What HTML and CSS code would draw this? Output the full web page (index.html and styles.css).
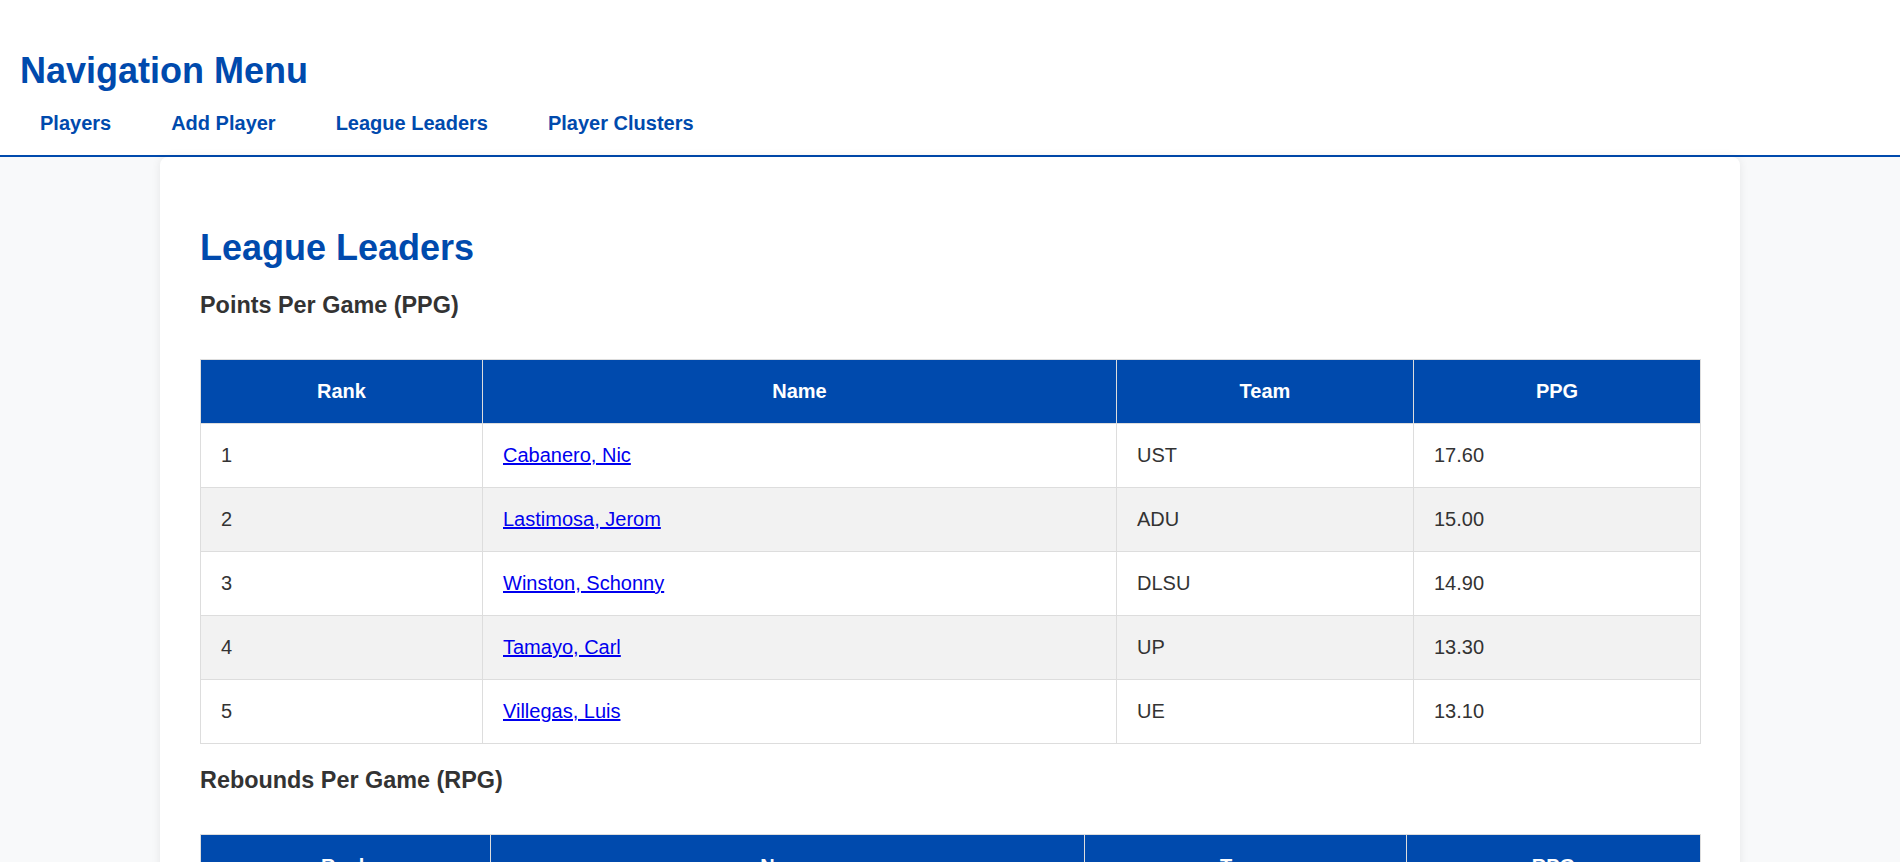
FILE: index.html
```html
<!DOCTYPE html>
<html lang="en">
<head>
<meta charset="utf-8">
<title>League Leaders</title>
<link rel="stylesheet" href="styles.css">
</head>
<body>
<header class="site-header">
  <h1 class="site-title">Navigation Menu</h1>
  <nav class="main-nav">
    <ul class="nav-list">
      <li><a class="nav-link" href="#">Players</a></li>
      <li><a class="nav-link" href="#">Add Player</a></li>
      <li><a class="nav-link" href="#">League Leaders</a></li>
      <li><a class="nav-link" href="#">Player Clusters</a></li>
    </ul>
  </nav>
</header>
<main class="card">
  <h2 class="page-title">League Leaders</h2>

  <h3 class="section-title">Points Per Game (PPG)</h3>
  <table class="leaders">
    <colgroup>
      <col class="t1-c1"><col class="t1-c2"><col class="t1-c3"><col class="t1-c4">
    </colgroup>
    <thead>
      <tr><th>Rank</th><th>Name</th><th>Team</th><th>PPG</th></tr>
    </thead>
    <tbody>
      <tr><td>1</td><td><a href="#">Cabanero, Nic</a></td><td>UST</td><td>17.60</td></tr>
      <tr><td>2</td><td><a href="#">Lastimosa, Jerom</a></td><td>ADU</td><td>15.00</td></tr>
      <tr><td>3</td><td><a href="#">Winston, Schonny</a></td><td>DLSU</td><td>14.90</td></tr>
      <tr><td>4</td><td><a href="#">Tamayo, Carl</a></td><td>UP</td><td>13.30</td></tr>
      <tr><td>5</td><td><a href="#">Villegas, Luis</a></td><td>UE</td><td>13.10</td></tr>
    </tbody>
  </table>

  <h3 class="section-title">Rebounds Per Game (RPG)</h3>
  <table class="leaders">
    <colgroup>
      <col class="t2-c1"><col class="t2-c2"><col class="t2-c3"><col class="t2-c4">
    </colgroup>
    <thead>
      <tr><th>Rank</th><th>Name</th><th>Team</th><th>RPG</th></tr>
    </thead>
  </table>
</main>
</body>
</html>
```
FILE: styles.css
```css
html, body {
  margin: 0;
  padding: 0;
}

body {
  background: #f8f9fa;
  font-family: Arial, "Liberation Sans", sans-serif;
  font-size: 20px;
  color: #333;
}

.site-header {
  background: #ffffff;
  padding: 50px 20px 0;
  border-bottom: 2px solid #004aad;
}

.site-title {
  margin: 0 0 20px;
  font-size: 36px;
  font-weight: bold;
  color: #004aad;
  line-height: normal;
}

.main-nav {
  padding-bottom: 20px;
}

.nav-list {
  list-style: none;
  margin: 0;
  padding: 0;
  display: flex;
  gap: 20px;
}

.nav-link {
  display: block;
  padding: 0 20px;
  color: #004aad;
  font-weight: bold;
  text-decoration: none;
}

.card {
  display: block;
  max-width: 1500px;
  margin: 0 auto;
  padding: 40px;
  background: #ffffff;
  border-radius: 8px;
  box-shadow: 0 0 10px rgba(0, 0, 0, 0.08);
}

.page-title {
  margin: 30px 0 0;
  font-size: 36px;
  color: #004aad;
}

.section-title {
  margin: 23px 0 0;
  font-size: 23.4px;
  color: #333;
}

.leaders {
  width: 100%;
  table-layout: fixed;
  border-collapse: collapse;
  margin: 40px 0 20px;
}

.leaders th,
.leaders td {
  border: 1px solid #ddd;
  padding: 20px;
  line-height: 23px;
  text-align: left;
}

.leaders th {
  background: #004aad;
  color: #ffffff;
  font-weight: bold;
  text-align: center;
}

.leaders tbody tr:nth-child(even) td {
  background: #f2f2f2;
}

.leaders a {
  color: #0000ee;
  text-decoration: underline;
}

.t1-c1 { width: 282px; }
.t1-c2 { width: 634px; }
.t1-c3 { width: 297px; }
.t1-c4 { width: 287px; }

.t2-c1 { width: 290px; }
.t2-c2 { width: 594px; }
.t2-c3 { width: 322px; }
.t2-c4 { width: 294px; }
```
